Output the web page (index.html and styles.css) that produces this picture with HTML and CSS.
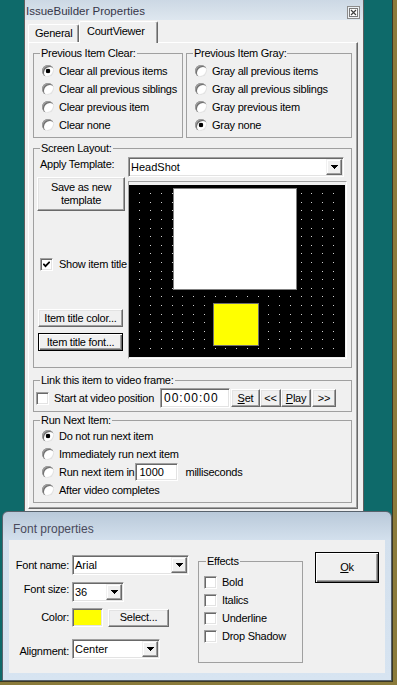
FILE: index.html
```html
<!DOCTYPE html>
<html lang="en">
<head>
  <meta charset="UTF-8">
  <title>IssueBuilder Properties</title>
  <link rel="stylesheet" href="styles.css">
  <script>
    // dot grid of the layout preview (20 x 20 cells)
    window.addEventListener('DOMContentLoaded', function() {
      var g = document.getElementById('dots');
      var html = '';
      for (var i = 1; i < 20; i++) {
        for (var j = 1; j < 20; j++) {
          html += '<rect x="' + Math.floor(i*10.75) + '" y="' + Math.floor(j*8.6) + '" width="1" height="1"/>';
        }
      }
      g.innerHTML = html;
    });
  </script>
</head>
<body>
<div class="screen">
  <div class="desktop">

    <div class="window props">
      <div class="titlebar">
        <span class="title">IssueBuilder Properties</span>
        <svg class="close" width="13" height="13" viewBox="0 0 13 13">
          <rect x="0.5" y="0.5" width="12" height="12" fill="#eef2f6" stroke="#8c8c8c"/>
          <rect x="2.5" y="2.5" width="8" height="8" fill="#fff" stroke="#7a7a7a"/>
          <path d="M4 4l5 5M9 4l-5 5" stroke="#404040" stroke-width="1.2"/>
        </svg>
      </div>
      <div class="tabs">
        <div class="tab">General</div>
        <div class="tab active">CourtViewer</div>
      </div>
      <div class="panel">
        <div class="g-row">
          <fieldset class="group g-clear">
            <legend>Previous Item Clear:</legend>
            <div class="opt"><span class="radio on"></span>Clear all previous items</div>
            <div class="opt"><span class="radio"></span>Clear all previous siblings</div>
            <div class="opt"><span class="radio"></span>Clear previous item</div>
            <div class="opt"><span class="radio"></span>Clear none</div>
          </fieldset>
          <fieldset class="group g-gray">
            <legend>Previous Item Gray:</legend>
            <div class="opt"><span class="radio"></span>Gray all previous items</div>
            <div class="opt"><span class="radio"></span>Gray all previous siblings</div>
            <div class="opt"><span class="radio"></span>Gray previous item</div>
            <div class="opt"><span class="radio on"></span>Gray none</div>
          </fieldset>
        </div>

        <fieldset class="group g-layout">
          <legend>Screen Layout:</legend>
          <div class="layout">
            <div class="lbl-template">Apply Template:</div>
            <div class="field combo w-template">
              <span>HeadShot</span>
              <span class="drop"><svg width="7" height="4" viewBox="0 0 7 4"><path d="M0 0h7v1h-1v1h-1v1h-1v1h-1v-1h-1v-1h-1v-1h-1z"/></svg></span>
            </div>
            <div class="layout-side">
              <button class="btn save">Save as new<br>template</button>
              <div class="show-title">
                <span class="check"><svg width="7" height="7" viewBox="0 0 7 7"><path d="M0.3 2.8L2.5 5.2L6.7 0.8" stroke="#000" stroke-width="1.8" fill="none"/></svg></span>Show item title
              </div>
              <button class="btn side">Item title color...</button>
              <button class="btn side default">Item title font...</button>
            </div>
            <div class="preview">
              <svg width="216" height="172" viewBox="0 0 216 172">
                <rect width="216" height="172" fill="#000"/>
                <g id="dots" fill="#cfcfcf"></g>
                <rect x="44.5" y="3.5" width="123" height="101" fill="#fff" stroke="#808080"/>
                <rect x="84.5" y="118.5" width="45" height="42" fill="#ffff00" stroke="#707070"/>
              </svg>
            </div>
          </div>
        </fieldset>

        <fieldset class="group g-link">
          <legend>Link this item to video frame:</legend>
          <div class="link-row">
            <span class="check"></span><span class="lbl-pos">Start at video position</span>
            <div class="field time">00:00:00</div>
            <button class="btn vbtn b-set"><u>S</u>et</button>
            <button class="btn vbtn b-prev">&lt;&lt;</button>
            <button class="btn vbtn b-play"><u>P</u>lay</button>
            <button class="btn vbtn b-next">&gt;&gt;</button>
          </div>
        </fieldset>

        <fieldset class="group g-run">
          <legend>Run Next Item:</legend>
          <div class="opt"><span class="radio on"></span>Do not run next item</div>
          <div class="opt"><span class="radio"></span>Immediately run next item</div>
          <div class="opt"><span class="radio"></span>Run next item in<span class="field ms">1000</span><span class="ms-unit">milliseconds</span></div>
          <div class="opt"><span class="radio"></span>After video completes</div>
        </fieldset>
      </div>
    </div>

    <div class="window fontprops">
      <div class="fp-title">Font properties</div>
      <div class="fp-body">
        <div class="fp-form">
          <div class="fp-row r-name">
            <label>Font name:</label>
            <div class="field combo w-name">
              <span>Arial</span>
              <span class="drop"><svg width="7" height="4" viewBox="0 0 7 4"><path d="M0 0h7v1h-1v1h-1v1h-1v1h-1v-1h-1v-1h-1v-1h-1z"/></svg></span>
            </div>
          </div>
          <div class="fp-row r-size">
            <label>Font size:</label>
            <div class="field combo w-size">
              <span>36</span>
              <span class="drop"><svg width="7" height="4" viewBox="0 0 7 4"><path d="M0 0h7v1h-1v1h-1v1h-1v1h-1v-1h-1v-1h-1v-1h-1z"/></svg></span>
            </div>
          </div>
          <div class="fp-row r-color">
            <label>Color:</label>
            <span class="field swatch"></span>
            <button class="btn select">Select...</button>
          </div>
          <div class="fp-row r-align">
            <label>Alignment:</label>
            <div class="field combo w-align">
              <span>Center</span>
              <span class="drop"><svg width="7" height="4" viewBox="0 0 7 4"><path d="M0 0h7v1h-1v1h-1v1h-1v1h-1v-1h-1v-1h-1v-1h-1z"/></svg></span>
            </div>
          </div>
        </div>
        <fieldset class="group fp-effects">
          <legend>Effects</legend>
          <div class="opt"><span class="check"></span>Bold</div>
          <div class="opt"><span class="check"></span>Italics</div>
          <div class="opt"><span class="check"></span>Underline</div>
          <div class="opt"><span class="check"></span>Drop Shadow</div>
        </fieldset>
        <button class="btn default ok"><u>O</u>k</button>
      </div>
    </div>

  </div>
</div>
</body>
</html>
```

FILE: styles.css
```css
* { box-sizing: border-box; }
body {
  margin: 0;
  font-family: "Liberation Sans", Arial, sans-serif;
  font-size: 11px;
  line-height: 13px;
  letter-spacing: -0.25px;
  color: #000;
}
.screen {
  width: 397px;
  height: 685px;
  background: #8b7b3b;
}
.desktop {
  position: relative;
  width: 393px;
  height: 682px;
  background: #0e6a6a;
  border-right: 1px solid #3b3826;
  border-bottom: 1px solid #3b3826;
  overflow: hidden;
}

/* main properties window */
.props {
  position: absolute;
  left: 24px; top: 0;
  width: 340px;
  height: 511px;
  background: #f0f0f0;
  border-left: 1px solid #5f5f5f;
  border-right: 1px solid #5f5f5f;
}
.titlebar {
  height: 20px;
  display: flex;
  justify-content: space-between;
  align-items: flex-start;
  padding: 0 3px 0 1px;
  background: linear-gradient(#ccd8e4, #dee7ef);
}
.title {
  padding-top: 5px;
  font-size: 11.5px;
  letter-spacing: 0;
  color: #363648;
}
.close { margin-top: 6px; display: block; }

.tabs {
  display: flex;
  align-items: flex-end;
  height: 22px;
  margin-left: 3px;
}
.tab {
  width: 51px;
  height: 18px;
  padding-left: 6px;
  line-height: 16px;
  border-top: 1px solid #fff;
  border-left: 1px solid #fff;
  border-right: 1px solid #696969;
  border-radius: 2px 2px 0 0;
  box-shadow: inset -1px 0 0 #a0a0a0;
  white-space: nowrap;
}
.tab.active {
  position: relative;
  width: 79px;
  height: 22px;
  margin-bottom: -1px;
  padding-left: 7px;
  line-height: 19px;
  background: #f0f0f0;
}
.panel {
  margin-left: 3px;
  width: 330px;
  height: 467px;
  padding: 4px 0 0 4px;
  border-top: 1px solid #fff;
  border-left: 1px solid #fff;
  border-right: 1px solid #696969;
  border-bottom: 1px solid #696969;
  box-shadow: inset -1px -1px 0 #a0a0a0;
}

/* group boxes */
.group {
  margin: 0;
  padding: 0;
  min-width: 0;
  border: 1px solid #a0a0a0;
}
.group legend {
  margin-left: 6px;
  padding: 0 1px;
  line-height: 12px;
}
.g-row { display: flex; gap: 3px; }
.g-clear { width: 150px; padding: 3px 0 3px; }
.g-gray { width: 166px; padding: 3px 0 3px; }
.g-layout { width: 319px; margin-top: 4px; padding: 3px 0 8px; }
.g-link { width: 319px; margin-top: 6px; padding: 2px 0 3px; }
.g-run { width: 319px; margin-top: 2px; padding: 1px 0 3px; }

.opt {
  display: flex;
  align-items: center;
  height: 18px;
  padding-left: 8px;
  white-space: nowrap;
}

/* controls */
.radio {
  flex: none;
  width: 12px; height: 12px;
  margin-right: 5px;
  border-radius: 50%;
  background: #fff;
  box-shadow: inset 1px 1px 0 #a0a0a0, inset 2px 2px 0 #707070, inset -1px -1px 0 #e3e3e3;
}
.radio.on {
  background: radial-gradient(circle at 6px 6px, #000 2px, #fff 2.6px);
}
.check {
  flex: none;
  display: flex;
  align-items: center;
  justify-content: center;
  width: 13px; height: 13px;
  margin-right: 5px;
  background: #fff;
  border: 1px solid;
  border-color: #a0a0a0 #fff #fff #a0a0a0;
  box-shadow: inset 1px 1px 0 #696969, inset -1px -1px 0 #e3e3e3;
}
.check svg { display: block; }
.field {
  background: #fff;
  border: 1px solid;
  border-color: #a0a0a0 #fff #fff #a0a0a0;
  box-shadow: inset 1px 1px 0 #696969, inset -1px -1px 0 #e3e3e3;
}
.combo {
  display: flex;
  align-items: center;
  justify-content: space-between;
  height: 20px;
  padding: 2px 1px 2px 2px;
  letter-spacing: 0;
}
.drop {
  display: flex;
  align-items: center;
  justify-content: center;
  width: 16px;
  height: 16px;
  background: #f0f0f0;
  border: 1px solid;
  border-color: #f0f0f0 #696969 #696969 #f0f0f0;
  box-shadow: inset -1px -1px 0 #a0a0a0, inset 1px 1px 0 #fff;
}
.drop svg { display: block; }
.btn {
  font: inherit;
  letter-spacing: inherit;
  color: #000;
  background: #f0f0f0;
  padding: 0;
  border: 1px solid;
  border-color: #fff #696969 #696969 #fff;
  box-shadow: inset -1px -1px 0 #a0a0a0, inset 1px 1px 0 #e3e3e3;
  white-space: nowrap;
}
.btn.default {
  border: 1px solid #000;
  box-shadow: inset 1px 1px 0 #fff, inset -1px -1px 0 #696969, inset -2px -2px 0 #a0a0a0;
}
u { text-decoration: underline; }

/* screen layout */
.layout {
  display: grid;
  grid-template-columns: 91px 219px;
  grid-template-rows: 20px auto;
  margin-left: 3px;
}
.lbl-template { padding-left: 3px; line-height: 14px; }
.w-template { width: 216px; }
.layout-side {
  display: flex;
  flex-direction: column;
  align-items: flex-start;
  overflow: hidden;
}
.btn.save { width: 88px; height: 34px; line-height: 13px; }
.show-title {
  display: flex;
  align-items: center;
  height: 13px;
  margin: 47px 0 0 3px;
  white-space: nowrap;
}
.show-title .check { margin-right: 6px; }
.btn.side { width: 85px; height: 18px; margin: 38px 0 0 1px; }
.btn.side.default { margin-top: 6px; }
.preview {
  margin-top: 4px;
  width: 219px;
  height: 178px;
  padding: 3px 1px 1px 0;
  border: 1px solid;
  border-color: #a0a0a0 #fff #fff #a0a0a0;
}
.preview svg { display: block; }

/* video link */
.link-row {
  display: flex;
  align-items: center;
  height: 20px;
  padding-left: 2px;
}
.lbl-pos { width: 106px; white-space: nowrap; }
.time {
  width: 70px;
  height: 20px;
  margin-right: 1px;
  padding-left: 3px;
  line-height: 18px;
  font-size: 12px;
  letter-spacing: 1px;
}
.vbtn { height: 18px; }
.b-set { width: 29px; }
.b-prev { width: 21px; }
.b-play { width: 30px; }
.b-next { width: 24px; margin-left: 1px; }

.ms {
  width: 43px;
  height: 18px;
  margin-left: 1px;
  padding-left: 3px;
  line-height: 16px;
  letter-spacing: 0;
}
.ms-unit { margin-left: 7px; }

/* font properties dialog */
.fontprops {
  position: absolute;
  left: 2px; top: 511px;
  width: 390px;
  height: 170px;
  padding: 0 6px 7px;
  border: 1px solid #58626c;
  border-radius: 6px 6px 0 0;
  background: linear-gradient(#b9c9d9, #d3e0ed 28px, #d7e4f1);
}
.fp-title {
  height: 28px;
  padding: 9px 0 0 4px;
  font-size: 12px;
  line-height: 16px;
  letter-spacing: 0;
  color: #4a4a5c;
}
.fp-body {
  display: flex;
  align-items: flex-start;
  height: 133px;
  background: #f0f0f0;
}
.fp-form { width: 189px; padding-top: 15px; }
.fp-row { display: flex; align-items: center; height: 20px; }
.fp-row label {
  width: 63px;
  padding-right: 3px;
  text-align: right;
  white-space: nowrap;
}
.r-size { margin-top: 7px; }
.r-size label { padding-bottom: 5px; }
.r-color { margin-top: 6px; height: 19px; }
.r-align { margin-top: 12px; }
.r-align label { padding-top: 5px; }
.w-name { width: 117px; }
.w-size { width: 52px; }
.w-align { width: 88px; }
.swatch {
  width: 31px;
  height: 19px;
  background: #ffff00;
}
.btn.select { width: 61px; height: 18px; margin-left: 5px; }
.fp-effects { width: 105px; margin-top: 15px; padding: 6px 0 17px; }
.fp-effects legend { margin-left: 7px; }
.fp-effects .opt { padding-left: 5px; }
.btn.ok { width: 64px; height: 31px; margin: 12px 0 0 12px; }
```
